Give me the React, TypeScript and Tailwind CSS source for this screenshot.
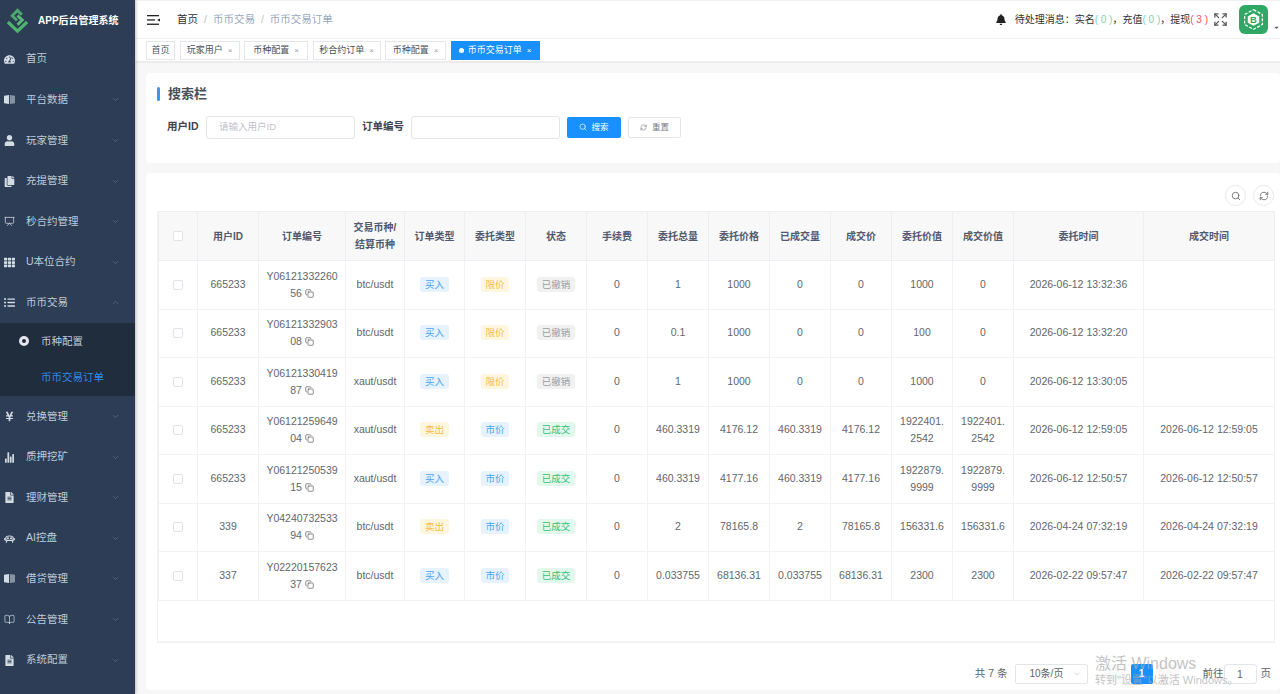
import React from "react";
import { ChevronDown, ChevronUp, Search, RefreshCw, Copy, BookOpen, Presentation, Expand } from "lucide-react";
import { FaTachometerAlt, FaUser, FaCopy, FaTh, FaListUl, FaYenSign, FaBell, FaFileAlt, FaCaretDown } from "react-icons/fa";
import { IoStatsChart } from "react-icons/io5";

const font = "font-['Liberation_Sans','Noto_Sans_CJK_SC',sans-serif]";

function HalfBook() {
  return (
    <svg viewBox="0 0 12 12" className="w-[11px] h-[11px]" fill="currentColor">
      <path d="M0 2 L5.5 1 V11 L0 10 Z" />
      <path d="M6.5 1 L12 2 V10 L6.5 11 Z" opacity="0.55" />
    </svg>
  );
}
function Robot() {
  return (
    <svg viewBox="0 0 12 12" className="w-[11px] h-[11px]" fill="none" stroke="currentColor" strokeWidth="1.3">
      <path d="M2 5.5 C2 2.5 10 2.5 10 5.5 V8 H2 Z" />
      <path d="M0.8 5.5 V8 M11.2 5.5 V8 M3 8 L2.5 10.5 M9 8 L9.5 10.5" />
      <circle cx="4.3" cy="5.7" r=".5" fill="currentColor" />
      <circle cx="7.7" cy="5.7" r=".5" fill="currentColor" />
    </svg>
  );
}

const ic = "w-[11px] h-[11px]";
type MenuItem = { label: string; icon: React.ReactNode; arrow?: "down" | "up" };
const menuTop: MenuItem[] = [
  { label: "首页", icon: <FaTachometerAlt className={ic} /> },
  { label: "平台数据", icon: <HalfBook />, arrow: "down" },
  { label: "玩家管理", icon: <FaUser className={ic} />, arrow: "down" },
  { label: "充提管理", icon: <FaCopy className={ic} />, arrow: "down" },
  { label: "秒合约管理", icon: <Presentation className={ic} strokeWidth={1.6} />, arrow: "down" },
  { label: "U本位合约", icon: <FaTh className={ic} />, arrow: "down" },
  { label: "币币交易", icon: <FaListUl className={ic} />, arrow: "up" },
];
const menuBottom: MenuItem[] = [
  { label: "兑换管理", icon: <FaYenSign className={ic} />, arrow: "down" },
  { label: "质押挖矿", icon: <IoStatsChart className={ic} />, arrow: "down" },
  { label: "理财管理", icon: <FaFileAlt className={ic} />, arrow: "down" },
  { label: "AI控盘", icon: <Robot />, arrow: "down" },
  { label: "借贷管理", icon: <HalfBook />, arrow: "down" },
  { label: "公告管理", icon: <BookOpen className={ic} strokeWidth={1.5} />, arrow: "down" },
  { label: "系统配置", icon: <FaFileAlt className={ic} />, arrow: "down" },
];

function MenuRow({ item }: { item: MenuItem }) {
  return (
    <div className="h-[40.6px] flex items-center pl-[4px] pr-[15px] text-[#bfcbd9] shrink-0">
      <span className="w-[11px] flex justify-center text-[#d3dbe4]">{item.icon}</span>
      <span className="ml-[11px] text-[10.5px] flex-1 whitespace-nowrap">{item.label}</span>
      {item.arrow === "down" && <ChevronDown className="w-[9px] h-[9px] text-[#5f7088]" />}
      {item.arrow === "up" && <ChevronUp className="w-[9px] h-[9px] text-[#5f7088]" />}
    </div>
  );
}

function Sidebar() {
  return (
    <aside className="w-[135px] shrink-0 bg-[#2c3d55] flex flex-col overflow-hidden shadow-[1px_0_3px_rgba(0,0,0,0.25)] z-10">
      <div className="h-[38px] mt-[1px] flex items-center pl-[5px] shrink-0">
        <svg viewBox="0 0 26 26" className="w-[25px] h-[25px]" fill="none" strokeLinejoin="miter">
          <path d="M3 14.5 L13 24 L23 14.5" stroke="#4fb36f" strokeWidth="3.4" />
          <path d="M17.5 7 L13 2.5 L7.5 8 L12.5 13" stroke="#4aa96c" strokeWidth="3" />
          <path d="M13 8 L18 12.5 L13 17.5" stroke="#5cb878" strokeWidth="3" />
        </svg>
        <span className="ml-[8px] text-[10px] font-bold text-white whitespace-nowrap">APP后台管理系统</span>
      </div>
      {menuTop.map((m) => <MenuRow key={m.label} item={m} />)}
      <div className="bg-[#1f2d3d] shrink-0">
        <div className="h-[36.5px] flex items-center pl-[19px] text-[#bfcbd9]">
          <span className="w-[10px] h-[10px] rounded-full border-[3px] border-[#e4e8ee]" />
          <span className="ml-[12px] text-[10.5px]">币种配置</span>
        </div>
        <div className="h-[36.5px] flex items-center pl-[41px] text-[10.5px] text-[#2f8be6]">币币交易订单</div>
      </div>
      {menuBottom.map((m) => <MenuRow key={m.label} item={m} />)}
    </aside>
  );
}

function Header() {
  return (
    <header className="h-[39px] shrink-0 bg-white border-t border-t-[#f0f0f0] border-b border-b-[#f1f1f1] flex items-center pl-[12px] relative">
      <svg viewBox="0 0 13 10" className="w-[13px] h-[10px]" fill="#222">
        <rect x="0" y="0" width="12" height="1.3" />
        <rect x="0" y="4.3" width="8" height="1.3" />
        <rect x="0" y="8.6" width="12" height="1.3" />
        <path d="M13 3.5 V6.5 L10 5 Z" />
      </svg>
      <nav className="ml-[17px] flex items-center text-[10.5px] text-[#97a8be]">
        <span className="text-[#303133]">首页</span>
        <span className="mx-[6px] text-[#c0c4cc]">/</span>
        <span>币币交易</span>
        <span className="mx-[6px] text-[#c0c4cc]">/</span>
        <span>币币交易订单</span>
      </nav>
      <div className="ml-auto flex items-center">
        <FaBell className="w-[10px] h-[11px] text-[#222]" />
        <span className="ml-[9px] text-[10px] text-[#303133] whitespace-nowrap">
          待处理消息：实名<span className="text-[#7fd0b5]">( 0 )</span>，充值<span className="text-[#7fd0b5]">( 0 )</span>，提现<span className="text-[#f04f5f]">( 3 )</span>
        </span>
        <Expand className="ml-[5px] w-[15px] h-[15px] text-[#555]" strokeWidth={2} />
        <div className="ml-[11px] w-[29px] h-[29px] rounded-[6px] bg-[#2fa866] flex items-center justify-center">
          <svg viewBox="0 0 24 24" className="w-[25px] h-[25px]" fill="none" stroke="#fff" strokeWidth="1.2">
            <path d="M12 2.5 L20.5 7.2 V16.8 L12 21.5 L3.5 16.8 V7.2 Z" strokeDasharray="3 1.4" />
            <path d="M12 6 L17.5 9 V15 L12 18 L6.5 15 V9 Z" fill="#fff" stroke="none" />
            <text x="12" y="15.2" textAnchor="middle" fontSize="9" fontWeight="700" fill="#2fa866" stroke="none">B</text>
          </svg>
        </div>
        <FaCaretDown className="ml-[5px] mt-[16px] w-[7px] h-[7px] text-[#555]" />
      </div>
    </header>
  );
}

const tags = [
  { t: "首页", w: "w-[29px]" },
  { t: "玩家用户", w: "w-[60px]", c: true },
  { t: "币种配置", w: "w-[64px]", c: true },
  { t: "秒合约订单", w: "w-[68px]", c: true },
  { t: "币种配置", w: "w-[61px]", c: true },
];

function TagsBar() {
  return (
    <div className="h-[24px] shrink-0 bg-white border-b-2 border-b-[#ececec] flex items-start pt-[2px] pl-[11px] gap-[4.5px] text-[9px]">
      {tags.map((t, i) => (
        <div key={i} className={`${t.w} h-[19px] border border-[#e3e6ea] flex items-center justify-center text-[#495060] whitespace-nowrap`}>
          {t.t}
          {t.c && <span className="ml-[5px] text-[#9aa0a8] text-[8px]">×</span>}
        </div>
      ))}
      <div className="w-[89px] h-[19px] bg-[#1890ff] text-white flex items-center justify-center whitespace-nowrap">
        <span className="w-[5px] h-[5px] rounded-full bg-white mr-[4px]" />
        币币交易订单
        <span className="ml-[5px] text-[8px]">×</span>
      </div>
    </div>
  );
}

function SearchCard() {
  return (
    <section className="h-[90px] bg-white rounded-[4px] shrink-0 pl-[11px] pt-[11px]">
      <div className="flex items-center">
        <span className="w-[3px] h-[14px] rounded-[2px] bg-[#3b96f5]" />
        <span className="ml-[8px] text-[13px] font-bold text-[#4a4f57]">搜索栏</span>
      </div>
      <div className="mt-[12px] flex items-center pl-[10px] text-[10.5px] font-bold text-[#3f444b]">
        <span className="w-[39px] whitespace-nowrap">用户ID</span>
        <div className="w-[149px] h-[23px] border border-[#e2e5ea] rounded-[3px] flex items-center pl-[12px] text-[9.5px] font-normal text-[#c0c4cc]">请输入用户ID</div>
        <span className="ml-[7px] w-[49px] whitespace-nowrap">订单编号</span>
        <div className="w-[149px] h-[23px] border border-[#e2e5ea] rounded-[3px]" />
        <button className="ml-[7px] w-[54px] h-[21px] bg-[#1890ff] rounded-[2px] flex items-center justify-center text-white text-[8.5px] font-normal">
          <Search className="w-[8px] h-[8px] mr-[4px]" />搜索
        </button>
        <button className="ml-[7px] w-[53px] h-[21px] bg-white border border-[#e2e5ea] rounded-[2px] flex items-center justify-center text-[#7b8087] text-[8.5px] font-normal">
          <RefreshCw className="w-[7px] h-[7px] mr-[5px]" />重置
        </button>
      </div>
    </section>
  );
}

const cols = [39, 61, 87, 59, 60, 61, 61, 61, 61, 61, 61, 61, 61, 61, 130, 131];
const heads = ["用户ID", "订单编号", "交易币种/\n结算币种", "订单类型", "委托类型", "状态", "手续费", "委托总量", "委托价格", "已成交量", "成交价", "委托价值", "成交价值", "委托时间", "成交时间"];

type Row = string[];
const rows: Row[] = [
  ["665233", "Y06121332260|56", "btc/usdt", "买入", "限价", "已撤销", "0", "1", "1000", "0", "0", "1000", "0", "2026-06-12 13:32:36", ""],
  ["665233", "Y06121332903|08", "btc/usdt", "买入", "限价", "已撤销", "0", "0.1", "1000", "0", "0", "100", "0", "2026-06-12 13:32:20", ""],
  ["665233", "Y06121330419|87", "xaut/usdt", "买入", "限价", "已撤销", "0", "1", "1000", "0", "0", "1000", "0", "2026-06-12 13:30:05", ""],
  ["665233", "Y06121259649|04", "xaut/usdt", "卖出", "市价", "已成交", "0", "460.3319", "4176.12", "460.3319", "4176.12", "1922401.|2542", "1922401.|2542", "2026-06-12 12:59:05", "2026-06-12 12:59:05"],
  ["665233", "Y06121250539|15", "xaut/usdt", "买入", "市价", "已成交", "0", "460.3319", "4177.16", "460.3319", "4177.16", "1922879.|9999", "1922879.|9999", "2026-06-12 12:50:57", "2026-06-12 12:50:57"],
  ["339", "Y04240732533|94", "btc/usdt", "卖出", "市价", "已成交", "0", "2", "78165.8", "2", "78165.8", "156331.6", "156331.6", "2026-04-24 07:32:19", "2026-04-24 07:32:19"],
  ["337", "Y02220157623|37", "btc/usdt", "买入", "市价", "已成交", "0", "0.033755", "68136.31", "0.033755", "68136.31", "2300", "2300", "2026-02-22 09:57:47", "2026-02-22 09:57:47"],
];

const tagClass: Record<string, string> = {
  买入: "bg-[#e6f3ff] text-[#4ca3f5]",
  卖出: "bg-[#fff6e0] text-[#f5bd3c]",
  限价: "bg-[#fff6e0] text-[#f5bd3c]",
  市价: "bg-[#e6f3ff] text-[#4ca3f5]",
  已撤销: "bg-[#f1f1f2] text-[#9a9da3]",
  已成交: "bg-[#e3f8ec] text-[#33c07a]",
};

function Cell({ value, index }: { value: string; index: number }) {
  if (tagClass[value]) {
    return <span className={`inline-block h-[15px] leading-[15px] px-[4.5px] rounded-[3px] text-[9.5px] ${tagClass[value]}`}>{value}</span>;
  }
  const parts = value.split("|");
  if (parts.length === 2) {
    return (
      <div className="leading-[17px]">
        <div>{parts[0]}</div>
        <div className="flex items-center justify-center">
          {parts[1]}
          {index === 1 && <Copy className="ml-[3px] w-[9px] h-[9px] text-[#666]" />}
        </div>
      </div>
    );
  }
  return <span>{value}</span>;
}

function Checkbox() {
  return <span className="block mx-auto w-[10px] h-[10px] rounded-[2px] border border-[#dfe2e7] bg-white" />;
}

function DataTable() {
  return (
    <div className="h-[432px] border-b-2 border-x border-[#f0f2f5] shrink-0 w-[1118px]">
      <table className="table-fixed border-collapse w-[1116px] text-[10.5px] text-[#62666d]">
        <colgroup>
          {cols.map((w, i) => <col key={i} style={{ width: w }} />)}
        </colgroup>
        <thead>
          <tr className="h-[49px] bg-[#f8f8f9] text-[#515a6e]">
            <th className="border border-[#eceef2] font-normal"><Checkbox /></th>
            {heads.map((h) => (
              <th key={h} className="border border-[#eceef2] font-bold text-[10px] leading-[17px] whitespace-pre-line">{h}</th>
            ))}
          </tr>
        </thead>
        <tbody>
          {rows.map((r, i) => (
            <tr key={i} className="h-[48.5px]">
              <td className="border border-[#f0f2f5]"><Checkbox /></td>
              {r.map((v, j) => (
                <td key={j} className="border border-[#f0f2f5] text-center p-0">
                  <Cell value={v} index={j} />
                </td>
              ))}
            </tr>
          ))}
        </tbody>
      </table>
    </div>
  );
}

function Pagination() {
  return (
    <div className="flex items-center justify-end pr-[3px] mt-[20px] h-[21px] text-[10.5px] text-[#606266] relative">
      <span>共 7 条</span>
      <div className="ml-[7px] w-[73px] h-[20px] border border-[#e2e5ea] rounded-[2px] flex items-center pl-[14px] pr-[6px]">
        <span className="flex-1 text-[10px]">10条/页</span>
        <ChevronDown className="w-[8px] h-[8px] text-[#c0c4cc]" />
      </div>
      <span className="ml-[17px] w-[22px] h-[20px] bg-[#f9f9f9] rounded-[2px]" />
      <span className="ml-[4px] w-[22px] h-[20px] bg-[#1890ff] rounded-[2px] text-white font-bold text-center leading-[20px] text-[10px]">1</span>
      <span className="ml-[4px] w-[22px] h-[20px] bg-[#f9f9f9] rounded-[2px]" />
      <span className="ml-[24px] whitespace-nowrap">前往</span>
      <div className="w-[33px] h-[20px] border border-[#e2e5ea] rounded-[3px] text-center leading-[18px]">1</div>
      <span className="ml-[4px]">页</span>
      <div className="absolute left-[938px] top-[-9px] pointer-events-none text-[#a9a9a9]/70 whitespace-nowrap">
        <div className="text-[16px] leading-[20px]">激活 Windows</div>
        <div className="text-[11px] leading-[14px] mt-[-1px]">转到"设置"以激活 Windows。</div>
      </div>
    </div>
  );
}

function TableCard() {
  return (
    <section className="mt-[10px] h-[517px] bg-white rounded-[4px] shrink-0 pl-[11px] pr-[6px] pt-[12px]">
      <div className="h-[26px] flex items-start justify-end gap-[7px]">
        <span className="w-[21px] h-[21px] rounded-full border border-[#e6e8eb] flex items-center justify-center">
          <Search className="w-[10px] h-[10px] text-[#666]" />
        </span>
        <span className="w-[21px] h-[21px] rounded-full border border-[#e6e8eb] flex items-center justify-center">
          <RefreshCw className="w-[10px] h-[10px] text-[#666]" />
        </span>
      </div>
      <DataTable />
      <Pagination />
    </section>
  );
}

export default function App() {
  return (
    <div className={`${font} w-[1280px] h-[694px] flex overflow-hidden bg-white`}>
      <Sidebar />
      <main className="flex-1 flex flex-col min-w-0 overflow-hidden">
        <Header />
        <TagsBar />
        <div className="flex-1 bg-[#f7f7f7] pl-[11px] pt-[10px] overflow-hidden flex flex-col">
          <SearchCard />
          <TableCard />
        </div>
      </main>
    </div>
  );
}
